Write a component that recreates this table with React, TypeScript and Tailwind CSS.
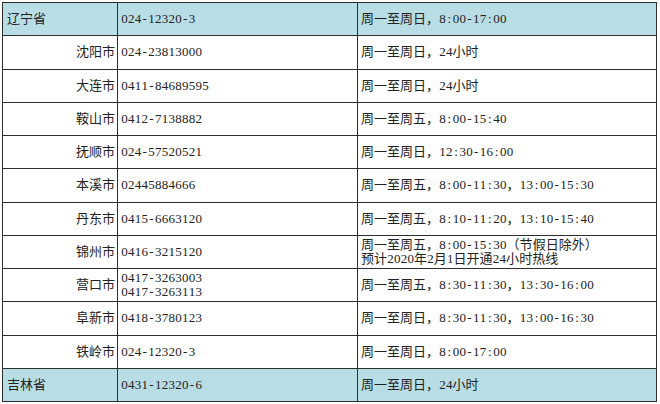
const rows: { name: string; phone: string[]; hours: string[]; province?: boolean }[] = [
  { name: "辽宁省", phone: ["024-12320-3"], hours: ["周一至周日，8:00-17:00"], province: true },
  { name: "沈阳市", phone: ["024-23813000"], hours: ["周一至周日，24小时"] },
  { name: "大连市", phone: ["0411-84689595"], hours: ["周一至周日，24小时"] },
  { name: "鞍山市", phone: ["0412-7138882"], hours: ["周一至周五，8:00-15:40"] },
  { name: "抚顺市", phone: ["024-57520521"], hours: ["周一至周日，12:30-16:00"] },
  { name: "本溪市", phone: ["02445884666"], hours: ["周一至周五，8:00-11:30，13:00-15:30"] },
  { name: "丹东市", phone: ["0415-6663120"], hours: ["周一至周五，8:10-11:20，13:10-15:40"] },
  {
    name: "锦州市",
    phone: ["0416-3215120"],
    hours: ["周一至周五，8:00-15:30（节假日除外）", "预计2020年2月1日开通24小时热线"],
  },
  { name: "营口市", phone: ["0417-3263003", "0417-3263113"], hours: ["周一至周五，8:30-11:30，13:30-16:00"] },
  { name: "阜新市", phone: ["0418-3780123"], hours: ["周一至周日，8:30-11:30，13:00-16:30"] },
  { name: "铁岭市", phone: ["024-12320-3"], hours: ["周一至周日，8:00-17:00"] },
  { name: "吉林省", phone: ["0431-12320-6"], hours: ["周一至周日，24小时"], province: true },
];

// half-width chars get a fixed cell, like the SimSun original
function Line({ text }: { text: string }) {
  return (
    <div className="whitespace-nowrap">
      {Array.from(text).map((c, i) =>
        c.charCodeAt(0) < 128 ? (
          <span key={i} className="inline-block w-[6.75px] text-center">
            {c}
          </span>
        ) : (
          <span key={i}>{c}</span>
        )
      )}
    </div>
  );
}

export default function App() {
  return (
    <div
      className="w-[660px] h-[404px] bg-white pt-[2px] pl-[2px] text-[13px] leading-[14px] text-[#222]"
      style={{ fontFamily: '"Liberation Serif", "Noto Sans CJK SC", serif' }}
    >
      <div className="grid grid-cols-[115px_240px_299px] border-l border-t border-[#2e2e2e] w-fit">
        {rows.map((r) => {
          const bg = r.province ? "bg-[#b9dde5]" : "bg-white";
          const cell = `h-[33.25px] border-r border-b border-[#2e2e2e] flex flex-col justify-center ${bg}`;
          return (
            <div key={r.name} className="contents">
              <div className={`${cell} ${r.province ? "items-start pl-[4px]" : "items-end pr-[2px]"}`}>
                {r.name}
              </div>
              <div className={`${cell} pl-[3px]`}>
                {r.phone.map((p) => (
                  <Line key={p} text={p} />
                ))}
              </div>
              <div className={`${cell} pl-[3px]`}>
                {r.hours.map((h) => (
                  <Line key={h} text={h} />
                ))}
              </div>
            </div>
          );
        })}
      </div>
    </div>
  );
}
